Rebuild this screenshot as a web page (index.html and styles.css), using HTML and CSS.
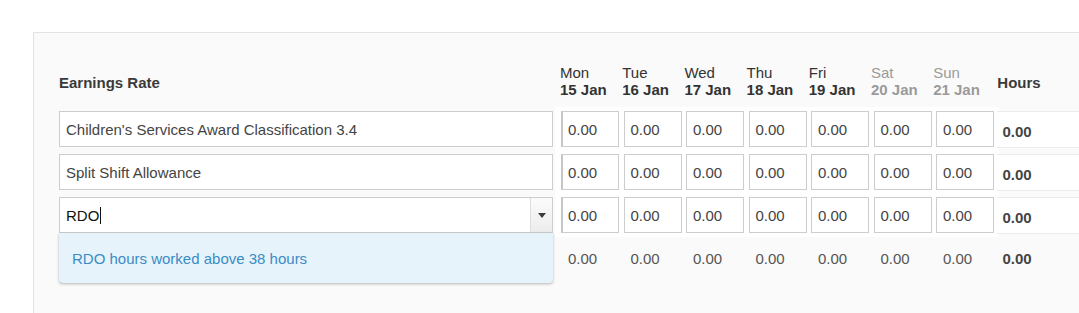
FILE: index.html
```html
<!DOCTYPE html>
<html lang="en">
<head>
<meta charset="utf-8">
<title>Earnings</title>
<link rel="stylesheet" href="styles.css">
</head>
<body>
<div class="page">
  <div class="panel">
    <div class="grid head">
      <div class="h-label">Earnings Rate</div>
      <div class="h-day"><span>Mon</span><b>15 Jan</b></div>
      <div class="h-day"><span>Tue</span><b>16 Jan</b></div>
      <div class="h-day"><span>Wed</span><b>17 Jan</b></div>
      <div class="h-day"><span>Thu</span><b>18 Jan</b></div>
      <div class="h-day"><span>Fri</span><b>19 Jan</b></div>
      <div class="h-day weekend"><span>Sat</span><b>20 Jan</b></div>
      <div class="h-day weekend"><span>Sun</span><b>21 Jan</b></div>
      <div class="h-hours">Hours</div>
    </div>

    <div class="grid row">
      <div class="c-label"><div class="field">Children's Services Award Classification 3.4</div></div>
      <div class="c-day"><div class="field num first">0.00</div></div>
      <div class="c-day"><div class="field num">0.00</div></div>
      <div class="c-day"><div class="field num">0.00</div></div>
      <div class="c-day"><div class="field num">0.00</div></div>
      <div class="c-day"><div class="field num">0.00</div></div>
      <div class="c-day"><div class="field num">0.00</div></div>
      <div class="c-day"><div class="field num">0.00</div></div>
      <div class="c-hours"><div class="hours-box">0.00</div></div>
    </div>

    <div class="grid row">
      <div class="c-label"><div class="field">Split Shift Allowance</div></div>
      <div class="c-day"><div class="field num first">0.00</div></div>
      <div class="c-day"><div class="field num">0.00</div></div>
      <div class="c-day"><div class="field num">0.00</div></div>
      <div class="c-day"><div class="field num">0.00</div></div>
      <div class="c-day"><div class="field num">0.00</div></div>
      <div class="c-day"><div class="field num">0.00</div></div>
      <div class="c-day"><div class="field num">0.00</div></div>
      <div class="c-hours"><div class="hours-box">0.00</div></div>
    </div>

    <div class="grid row last">
      <div class="c-label">
        <div class="combo">
          <div class="field combo-field"><span class="typed">RDO</span><span class="caret"></span></div>
          <div class="combo-btn"><span class="tri"></span></div>
          <div class="menu">
            <div class="menu-item">RDO hours worked above 38 hours</div>
          </div>
        </div>
      </div>
      <div class="c-day"><div class="field num first">0.00</div></div>
      <div class="c-day"><div class="field num">0.00</div></div>
      <div class="c-day"><div class="field num">0.00</div></div>
      <div class="c-day"><div class="field num">0.00</div></div>
      <div class="c-day"><div class="field num">0.00</div></div>
      <div class="c-day"><div class="field num">0.00</div></div>
      <div class="c-day"><div class="field num">0.00</div></div>
      <div class="c-hours"><div class="hours-box">0.00</div></div>
    </div>

    <div class="grid totals">
      <div class="t-label"><div class="add-btn"></div></div>
      <div class="t-day">0.00</div>
      <div class="t-day">0.00</div>
      <div class="t-day">0.00</div>
      <div class="t-day">0.00</div>
      <div class="t-day">0.00</div>
      <div class="t-day">0.00</div>
      <div class="t-day">0.00</div>
      <div class="t-hours">0.00</div>
    </div>
  </div>
</div>
</body>
</html>
```
FILE: styles.css
```css
html, body {
  margin: 0;
  padding: 0;
  background: #ffffff;
  overflow: hidden;
}

body {
  font-family: "Liberation Sans", Arial, Helvetica, sans-serif;
  font-size: 15px;
  color: #333;
}

.page {
  padding: 32px 0 0 33px;
}

.panel {
  background: #fafafa;
  border: 1px solid #e3e3e3;
  border-right: none;
  padding: 31px 0 0 25px;
  height: 400px;
}

.grid {
  display: grid;
  grid-template-columns: 502px repeat(7, 62.5px) 1fr;
}

/* header */
.head {
  height: 34px;
  margin-bottom: 9px;
  grid-template-columns: 501px repeat(7, 62.2px) 1fr;
}

.h-label,
.h-hours {
  align-self: center;
  font-weight: bold;
  color: #3a3a3a;
  line-height: 17px;
  padding-top: 2px;
}

.h-hours {
  padding-left: 2px;
}

.h-day {
  display: flex;
  flex-direction: column;
  line-height: 17px;
  color: #333;
}

.h-day b {
  font-weight: bold;
}

.h-day.weekend {
  color: #9a9a9a;
}

/* body rows */
.row {
  height: 43px;
}

.c-label {
  padding: 4px 0 3px 0;
  background: linear-gradient(to right, transparent 496px, #ffffff 496px);
}

.c-day {
  background: #ffffff;
  padding: 4px 0 3px 0;
}

.field {
  box-sizing: border-box;
  height: 36px;
  border: 1px solid #cdcdcd;
  background: #ffffff;
  display: flex;
  align-items: center;
  padding: 0 6px;
  color: #444;
  white-space: nowrap;
  overflow: hidden;
}

.c-label > .field {
  width: 494px;
}

.field.num {
  width: 58px;
}

.field.first {
  border-left: 2px solid #c6c6c6;
  padding-left: 5px;
}

.c-hours {
  padding: 4px 0 3px 0;
  margin-left: -2px;
}

.hours-box {
  box-sizing: border-box;
  height: 37px;
  background: #ffffff;
  border-top: 1px solid #ececec;
  border-bottom: 1px solid #ececec;
  display: flex;
  align-items: center;
  padding: 4px 0 0 6px;
  font-weight: bold;
  color: #444;
}

/* combobox */
.combo {
  position: relative;
  width: 494px;
  height: 36px;
}

.combo-field {
  width: 494px;
  color: #111;
}

.caret {
  display: inline-block;
  width: 1px;
  height: 17px;
  background: #111;
  margin-left: 1px;
}

.combo-btn {
  position: absolute;
  top: 1px;
  right: 1px;
  width: 21px;
  height: 34px;
  border-left: 1px solid #dddddd;
  background: linear-gradient(#fbfbfb, #ececec);
  display: flex;
  align-items: center;
  justify-content: center;
}

.tri {
  width: 0;
  height: 0;
  border-left: 4px solid transparent;
  border-right: 4px solid transparent;
  border-top: 5px solid #3c3c3c;
  margin-left: 1px;
}

.menu {
  position: absolute;
  left: 0;
  top: 36px;
  width: 494px;
  height: 50px;
  box-sizing: border-box;
  background: #e7f3fa;
  border-radius: 0 0 4px 4px;
  box-shadow: 0 1px 3px rgba(0, 0, 0, 0.28);
  z-index: 5;
  display: flex;
  align-items: center;
}

.menu-item {
  padding-left: 13px;
  color: #3a8cc6;
  padding-top: 1px;
}

/* totals */
.totals {
  height: 44px;
  align-items: center;
}

.t-label {
  align-self: stretch;
  position: relative;
  height: 44px;
}

.add-btn {
  margin-top: 16px;
  margin-left: 1px;
  width: 163px;
  height: 31px;
  box-sizing: border-box;
  border-bottom: 2px solid #7f7f7f;
  border-radius: 0 0 3px 3px;
}

.t-day {
  padding-left: 7px;
  color: #555;
}

.t-hours {
  padding-left: 4px;
  font-weight: bold;
  color: #444;
}
```
